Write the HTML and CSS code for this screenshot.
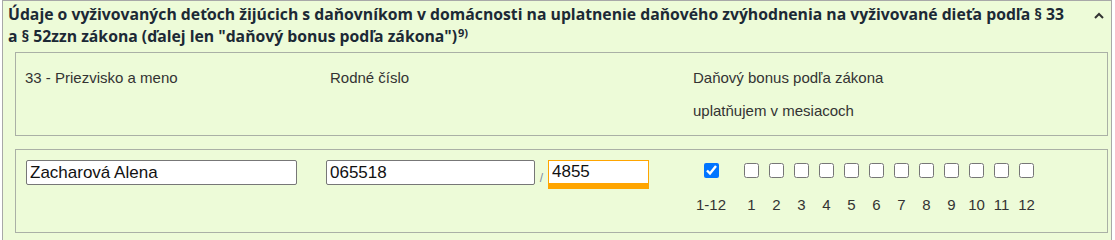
FILE: index.html
```html
<!DOCTYPE html>
<html lang="sk">
<head>
<meta charset="utf-8">
<title>Daňový bonus</title>
<link rel="stylesheet" href="styles.css">
</head>
<body>
<section class="panel">
  <header class="panel-head">
    <h2 class="panel-title">Údaje o vyživovaných deťoch žijúcich s daňovníkom v domácnosti na uplatnenie daňového zvýhodnenia na vyživované dieťa podľa §&nbsp;33 a&nbsp;§&nbsp;52zzn zákona (ďalej len "daňový bonus podľa zákona")<sup>9)</sup></h2>
    <svg class="chevron" width="12" height="8" viewBox="0 0 12 8"><polyline points="2,6 6,2 10,6" fill="none" stroke="#333" stroke-width="2"/></svg>
  </header>
  <div class="box box-head">
    <div class="col col-name">33 - Priezvisko a meno</div>
    <div class="col col-rc">Rodné číslo</div>
    <div class="col col-bonus">
      <div>Daňový bonus podľa zákona</div>
      <div class="second">uplatňujem v mesiacoch</div>
    </div>
  </div>
  <div class="box box-row">
    <div class="col col-name"><input class="txt name" type="text" value="Zacharová Alena"></div>
    <div class="col col-rc">
      <input class="txt rc1" type="text" value="065518"><span class="slash">/</span><input class="txt rc2" type="text" value="4855">
    </div>
    <div class="col col-bonus months">
      <label class="m all"><input type="checkbox" checked><span>1-12</span></label>
      <div class="mlist">
        <label class="m"><input type="checkbox"><span>1</span></label>
        <label class="m"><input type="checkbox"><span>2</span></label>
        <label class="m"><input type="checkbox"><span>3</span></label>
        <label class="m"><input type="checkbox"><span>4</span></label>
        <label class="m"><input type="checkbox"><span>5</span></label>
        <label class="m"><input type="checkbox"><span>6</span></label>
        <label class="m"><input type="checkbox"><span>7</span></label>
        <label class="m"><input type="checkbox"><span>8</span></label>
        <label class="m"><input type="checkbox"><span>9</span></label>
        <label class="m"><input type="checkbox"><span>10</span></label>
        <label class="m"><input type="checkbox"><span>11</span></label>
        <label class="m"><input type="checkbox"><span>12</span></label>
      </div>
    </div>
  </div>
</section>
</body>
</html>
```
FILE: styles.css
```css
html, body {
  margin: 0;
  padding: 0;
  background: #ffffff;
}
.panel {
  margin-left: 2px;
  width: 1110px;
  min-height: 240px;
  border: 1px solid #a8a8a8;
  border-bottom: none;
  background: #edfbd8;
  box-sizing: border-box;
}
.panel-head {
  display: flex;
  align-items: flex-start;
  padding: 2px 6px 0 5px;
  height: 51px;
  box-sizing: border-box;
}
.panel-title {
  flex: 1;
  margin: 0;
  font-family: "Open Sans", sans-serif;
  font-weight: 700;
  font-size: 15.75px;
  line-height: 22px;
  color: #1c2935;
}
.panel-title sup {
  font-size: 11px;
  line-height: 0;
  vertical-align: 5px;
  margin-left: 1px;
}
.chevron {
  margin-top: 9px;
  margin-left: 10px;
}
.box {
  margin: 0 3px 0 12px;
  border: 1px solid #aab0a6;
  display: flex;
  font-family: "Liberation Sans", Arial, sans-serif;
  font-size: 15px;
  color: #333;
}
.box-head {
  height: 84px;
  box-sizing: border-box;
  padding: 16px 0 0 9px;
  line-height: 17px;
}
.box-head .col-name { width: 305px; }
.box-head .col-rc { width: 363px; }
.box-head .second { margin-top: 16px; }
.box-row {
  margin-top: 13px;
  height: 84px;
  box-sizing: border-box;
  padding: 10px 0 0 10px;
}
.box-row .col-name { width: 300px; }
.box-row .col-rc { width: 367px; display: flex; align-items: flex-start; }
.txt {
  box-sizing: border-box;
  height: 25px;
  border: 1px solid #777;
  border-radius: 2px;
  background: #fff;
  padding: 1px 3px;
  font-family: "Liberation Sans", Arial, sans-serif;
  font-size: 17px;
  color: #111;
  outline: none;
}
.name { width: 271px; }
.rc1 { width: 209px; }
.slash {
  width: 13px;
  text-align: center;
  font-size: 12px;
  color: #7b8aa0;
  margin-top: 11px;
}
.rc2 {
  width: 101px;
  height: 29px;
  border: 1px solid #ffa500;
  border-bottom: 6px solid #ffa500;
  border-radius: 0;
  padding-top: 0;
}
.months {
  display: flex;
  align-items: flex-start;
  padding-top: 3px;
}
.mlist {
  display: flex;
  margin-left: 10px;
}
.m {
  display: flex;
  flex-direction: column;
  align-items: center;
  width: 25px;
  font-size: 15px;
  color: #333;
}
.m.all { width: 36px; }
.m input {
  width: 15px;
  height: 15px;
  margin: 0;
}
.m span {
  margin-top: 18px;
  line-height: 17px;
}
```
